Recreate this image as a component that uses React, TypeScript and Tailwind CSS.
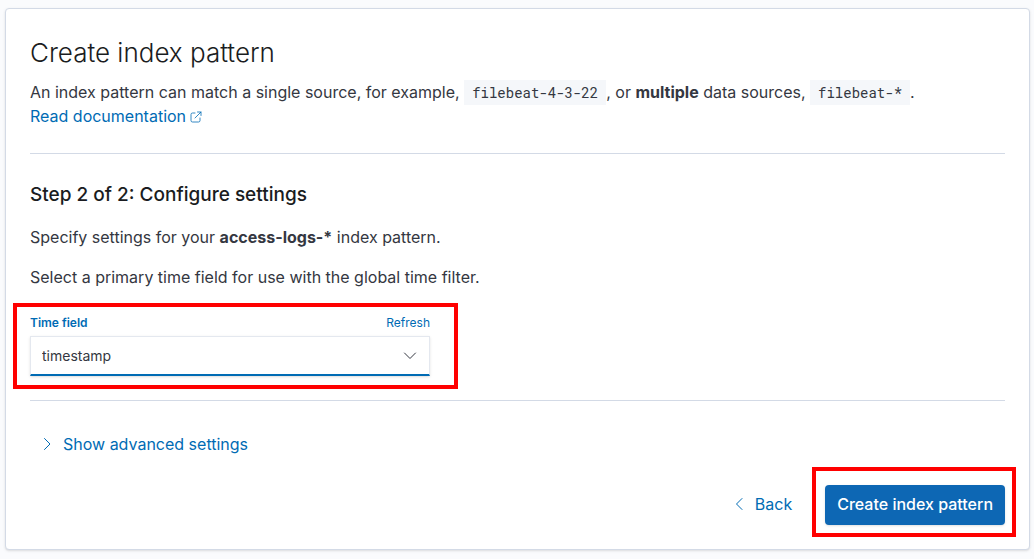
import React from "react";

function Chevron({ d, className }: { d: string; className?: string }) {
  return (
    <svg aria-hidden="true" viewBox="0 0 16 16" width="16" height="16" fill="none" stroke="currentColor" strokeLinecap="round" strokeLinejoin="round" className={className}>
      <path d={d} />
    </svg>
  );
}

function Code({ children }: { children: React.ReactNode }) {
  return <code className="bg-[#f5f7fa] px-2 py-[3px] font-['Roboto_Mono','DejaVu_Sans_Mono',monospace] text-sm text-[#343741]">{children}</code>;
}

export default function App() {
  return (
    <div className="bg-[#fafbfd] pt-2 pr-1 pb-[9px] pl-[5px] font-['Inter',sans-serif] text-base leading-6 text-[#343741]">
      <main className="rounded border border-[#d3dae6] bg-white px-6 pt-6 pb-3 shadow-sm">
        <h1 className="text-[26px] leading-10 font-light text-[#1a1c21]">Create index pattern</h1>
        <p className="mt-[7px]">
          An index pattern can match a single source, for example, <Code>filebeat-4-3-22</Code>, or <strong>multiple</strong> data sources, <Code>filebeat-*</Code>.
          <br />
          <a href="#docs" className="inline-flex items-center gap-1 text-[#006bb4]">
            Read documentation
            <svg aria-hidden="true" viewBox="0 0 12 12" width="12" height="12" fill="none" stroke="currentColor" strokeWidth="0.8" strokeLinecap="round" strokeLinejoin="round" className="mt-[2px]">
              <path d="M5 2H2.500a1.500 1.500 0 0 0-1.500 1.500v6A1.500 1.500 0 0 0 2.500 11h6A1.500 1.500 0 0 0 10 9.500V7M7.500 1H11v3.500M11 1 5 7" />
            </svg>
          </a>
        </p>
        <hr className="mt-[25px] border-[#d3dae6]" />
        <h2 className="mt-[25px] text-[19px] leading-8 font-medium text-[#1a1c21]">Step 2 of 2: Configure settings</h2>
        <p className="mt-[14px]">Specify settings for your <strong>access-logs-*</strong> index pattern.</p>
        <p className="mt-4">Select a primary time field for use with the global time filter.</p>
        <section className="mt-[14px] -ml-[17px] w-[445px] max-w-full border-4 border-[#ff0000] px-[13px] pt-2 pb-[9px]">
          <div className="flex max-w-[400px] justify-between text-xs text-[#006bb4]">
            <label htmlFor="time-field" className="font-semibold">Time field</label>
            <button type="button">Refresh</button>
          </div>
          <div className="mt-[5px] grid max-w-[400px] items-center">
            <select id="time-field" className="col-start-1 row-start-1 h-10 appearance-none border border-b-2 border-[#e4e8ef] border-b-[#006bb4] bg-white px-[11px] text-sm shadow-sm">
              <option>timestamp</option>
            </select>
            <Chevron d="M2.500 5 8 10.500 13.500 5" className="pointer-events-none col-start-1 row-start-1 mr-3 justify-self-end" />
          </div>
        </section>
        <hr className="mt-[11px] border-[#d3dae6]" />
        <button type="button" className="mt-[31px] flex items-center gap-2 px-[9px] text-[#006bb4]">
          <Chevron d="m5.500 2.500 5.500 5.500-5.500 5.500" />
          Show advanced settings
        </button>
        <div className="mt-[11px] -mr-[11px] flex items-end justify-end gap-5">
          <button type="button" className="mb-[13px] flex h-10 items-center gap-2 text-[#006bb4]">
            <Chevron d="M11 2.500 5.500 8l5.500 5.500" />
            Back
          </button>
          <div className="border-4 border-[#ff0000] pt-[14px] pr-[7px] pb-2 pl-[9px]">
            <button type="button" className="h-10 rounded bg-[#0d67b4] px-3 pb-[2px] font-medium text-white shadow-sm">Create index pattern</button>
          </div>
        </div>
      </main>
    </div>
  );
}
